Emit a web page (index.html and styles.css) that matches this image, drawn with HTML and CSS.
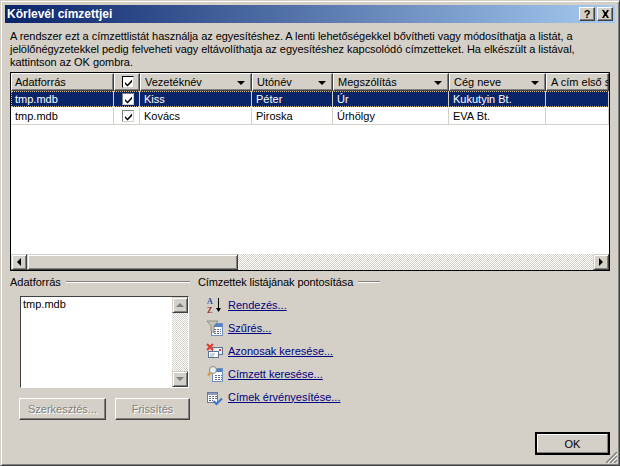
FILE: index.html

```html
<!DOCTYPE html>
<html>
<head>
  <title>Körlevél címzettjei</title>
  <link rel="stylesheet" href="styles.css">
</head>
<body>
  <div class="window">
    <div class="titlebar">
      <span class="title">Körlevél címzettjei</span>
      <span class="cap-btn help">?</span>
      <span class="cap-btn close">
        <svg width="9" height="8" viewBox="0 0 9 8"><path d="M1 0h2l1 2h1l1-2h2L6 3.500V4.500L8 8H6L5 6H4L3 8H1l2-3.500V3.500z" fill="#000"/></svg>
      </span>
    </div>
    <div class="content">
      <p class="intro">A rendszer ezt a címzettlistát használja az egyesítéshez. A lenti lehetőségekkel bővítheti vagy módosíthatja a listát, a<br>jelölőnégyzetekkel pedig felveheti vagy eltávolíthatja az egyesítéshez kapcsolódó címzetteket. Ha elkészült a listával,<br>kattintson az OK gombra.</p>

      <div class="grid">
        <div class="row head">
          <div class="cell c-src">Adatforrás</div>
          <div class="cell c-chk"><span class="check"><svg width="9" height="9" viewBox="0 0 9 9"><path d="M1 4l2.500 2.500L8 1.500v2.500L3.500 8.500 1 6z" fill="#000"/></svg></span></div>
          <div class="cell c-last">Vezetéknév<i class="arrow"></i></div>
          <div class="cell c-first">Utónév<i class="arrow"></i></div>
          <div class="cell c-title">Megszólítás<i class="arrow"></i></div>
          <div class="cell c-comp">Cég neve<i class="arrow"></i></div>
          <div class="cell c-addr">A cím első s</div>
        </div>
        <div class="row selected">
          <div class="cell c-src">tmp.mdb</div>
          <div class="cell c-chk"><span class="check"><svg width="9" height="9" viewBox="0 0 9 9"><path d="M1 4l2.500 2.500L8 1.500v2.500L3.500 8.500 1 6z" fill="#000"/></svg></span></div>
          <div class="cell c-last">Kiss</div>
          <div class="cell c-first">Péter</div>
          <div class="cell c-title">Úr</div>
          <div class="cell c-comp">Kukutyin Bt.</div>
          <div class="cell c-addr"></div>
        </div>
        <div class="row">
          <div class="cell c-src">tmp.mdb</div>
          <div class="cell c-chk"><span class="check"><svg width="9" height="9" viewBox="0 0 9 9"><path d="M1 4l2.500 2.500L8 1.500v2.500L3.500 8.500 1 6z" fill="#000"/></svg></span></div>
          <div class="cell c-last">Kovács</div>
          <div class="cell c-first">Piroska</div>
          <div class="cell c-title">Úrhölgy</div>
          <div class="cell c-comp">EVA Bt.</div>
          <div class="cell c-addr"></div>
        </div>
        <div class="grid-fill"></div>
        <div class="hscroll">
          <span class="sb-btn"><i class="tri-left"></i></span>
          <span class="sb-thumb"></span>
          <span class="sb-track"></span>
          <span class="sb-btn"><i class="tri-right"></i></span>
        </div>
      </div>

      <div class="lower">
        <div class="source">
          <div class="group-label"><span>Adatforrás</span><i class="rule"></i></div>
          <div class="listbox">
            <div class="list-text">tmp.mdb</div>
            <div class="vscroll">
              <span class="sb-btn"><i class="tri-up"></i></span>
              <span class="sb-track"></span>
              <span class="sb-btn"><i class="tri-down"></i></span>
            </div>
          </div>
          <div class="source-btns">
            <span class="btn disabled edit">Szerkesztés...</span>
            <span class="btn disabled refresh">Frissítés</span>
          </div>
        </div>

        <div class="refine">
          <div class="group-label"><span class="refine-label">Címzettek listájának pontosítása</span><i class="rule short"></i></div>
          <ul class="links">
            <li>
              <svg class="ico" width="20" height="20" viewBox="0 0 20 20"><text x="3" y="9" class="az-a">A</text><text x="3" y="18" class="az-z">Z</text><path d="M14.500 3v11" stroke="#000" fill="none"/><path d="M12 13h5l-2.500 4z" fill="#000"/></svg>
              <a href="#">Rendezés...</a>
            </li>
            <li>
              <svg class="ico" width="20" height="20" viewBox="0 0 20 20"><rect x="7.500" y="5.500" width="11" height="12" fill="#fff" stroke="#6f8fc0"/><path d="M8 6h10v3H8z" fill="#4f82cc"/><path d="M10 11.500h7M10 13.500h7M10 15.500h7" stroke="#5d6a88" stroke-dasharray="2 1"/><path d="M3 3h11L10 8v7l-3-2V8z" fill="#c4c4ba" stroke="#77776e" stroke-width=".7"/></svg>
              <a href="#">Szűrés...</a>
            </li>
            <li>
              <svg class="ico" width="20" height="20" viewBox="0 0 20 20"><rect x="8.500" y="6.500" width="10" height="7" fill="#e9eef5" stroke="#5f7396"/><path d="M15 8h2v2h-2z" fill="#d84a3a"/><rect x="4.500" y="10.500" width="10" height="6" fill="#fff" stroke="#5f7396"/><path d="M6 13h5M6 15h4" stroke="#9aa6ba"/><path d="M3 3l6 6M9 3L3 9" stroke="#e0392c" stroke-width="2"/></svg>
              <a href="#">Azonosak keresése...</a>
            </li>
            <li>
              <svg class="ico" width="20" height="20" viewBox="0 0 20 20"><rect x="8.500" y="4.500" width="10" height="13" fill="#fff" stroke="#6f8fc0"/><path d="M9 5h9v3H9z" fill="#4f82cc"/><path d="M11 11.500h7M11 13.500h7M11 15.500h7" stroke="#5d6a88" stroke-dasharray="2 1"/><circle cx="9" cy="6" r="3.500" fill="#e6eef6" stroke="#8a8a80"/><path d="M6.500 8.500L4 11.500" stroke="#d69a3c" stroke-width="2.500"/></svg>
              <a href="#">Címzett keresése...</a>
            </li>
            <li>
              <svg class="ico" width="20" height="20" viewBox="0 0 20 20"><rect x="3.500" y="5.500" width="10" height="10" fill="#fff" stroke="#6a7b9e"/><path d="M4 6h9v2H4z" fill="#8a9bbd"/><path d="M5 9.500h8M5 11.500h8M5 13.500h4" stroke="#5d6a88" stroke-dasharray="2 1"/><path d="M9.500 14l3 3L18 11.500" stroke="#3f78d0" stroke-width="2" fill="none"/></svg>
              <a href="#">Címek érvényesítése...</a>
            </li>
          </ul>
        </div>
      </div>

      <div class="footer">
        <span class="btn ok">OK</span>
      </div>
    </div>
    <svg class="grip" width="12" height="12" viewBox="0 0 12 12"><path d="M12 1L1 12M12 5L5 12M12 9L9 12" stroke="#808080" stroke-width="1.500" fill="none"/><path d="M12 3L3 12M12 7L7 12" stroke="#fff" fill="none"/></svg>
  </div>
</body>
</html>
```

FILE: styles.css

```css
* { box-sizing: border-box; }
html, body { margin: 0; padding: 0; }
body { width: 620px; height: 466px; overflow: hidden; font-family: "Liberation Sans", Arial, sans-serif; font-size: 11px; color: #000; background: #d4d0c8; }

.window { position: relative; width: 620px; height: 466px; display: flex; flex-direction: column; padding: 4px; background: #d4d0c8; border: 1px solid #404040; border-top-color: #d4d0c8; border-left-color: #d4d0c8; box-shadow: inset 1px 1px 0 #fff, inset -1px -1px 0 #808080; }

.titlebar { height: 18px; flex: none; display: flex; align-items: center; padding: 0 2px; background: linear-gradient(to right, #0a246a, #a6caf0); }
.title { flex: 1; color: #fff; font-weight: bold; font-size: 12px; }
.cap-btn { width: 16px; height: 14px; display: flex; align-items: center; justify-content: center; background: #d4d0c8; border: 1px solid #404040; border-top-color: #fff; border-left-color: #fff; box-shadow: inset -1px -1px 0 #808080; font-weight: bold; font-size: 11px; }
.help { margin-right: 2px; }

.content { flex: 1; display: flex; flex-direction: column; padding: 7px 5px 0; min-height: 0; }
.intro { margin: 0; line-height: 13px; height: 42px; letter-spacing: -0.05px; white-space: nowrap; }

.grid { width: 600px; height: 199px; flex: none; display: flex; flex-direction: column; background: #fff; border: 1px solid #000; overflow: hidden; }
.row { display: flex; height: 17px; flex: none; border-bottom: 1px solid #d4d0c8; }
.cell { height: 100%; padding: 2px 3px 0 4px; border-right: 1px solid #d4d0c8; white-space: nowrap; overflow: hidden; position: relative; }
.head { height: 18px; background: #d4d0c8; border-bottom: none; }
.head .cell { border: 1px solid #404040; border-top-color: #fff; border-left-color: #fff; box-shadow: inset -1px -1px 0 #808080; padding: 2px 3px 0 4px; }
.head .c-src { padding-left: 3px; }
.selected { background: #0a246a; color: #fff; outline: 1px dotted #d4c08c; outline-offset: -1px; border-bottom: none; height: 16px; margin-bottom: 1px; }
.selected .cell { border-right-color: #d4d0c8; }

.c-src { width: 103px; }
.c-chk { width: 26px; display: flex; }
.c-last { width: 112px; }
.c-first { width: 81px; }
.c-title { width: 116px; }
.c-comp { width: 97px; }
.c-addr { flex: 1; }
.cell.c-chk { padding-left: 8px; }
.head .cell.c-chk { padding-left: 7px; }

.check { width: 12px; height: 12px; display: flex; align-items: center; justify-content: center; background: #fff; border: 1px solid #808080; border-right-color: #d4d0c8; border-bottom-color: #d4d0c8; }
.head .check { border: 1px solid #000; border-right-color: #d4d0c8; border-bottom-color: #d4d0c8; }
.arrow { position: absolute; right: 6px; top: 7px; width: 0; height: 0; border-left: 4px solid transparent; border-right: 4px solid transparent; border-top: 4px solid #000; }

.grid-fill { flex: 1; }
.hscroll { height: 16px; flex: none; display: flex; background: #d4d0c8; }
.sb-btn { width: 16px; height: 16px; flex: none; display: flex; align-items: center; justify-content: center; background: #d4d0c8; border: 1px solid #404040; border-top-color: #d4d0c8; border-left-color: #d4d0c8; box-shadow: inset 1px 1px 0 #fff, inset -1px -1px 0 #808080; }
.sb-thumb { width: 211px; background: #d4d0c8; border: 1px solid #404040; border-top-color: #d4d0c8; border-left-color: #d4d0c8; box-shadow: inset 1px 1px 0 #fff, inset -1px -1px 0 #808080; }
.sb-track { flex: 1; background: repeating-conic-gradient(#d4d0c8 0 25%, #fff 0 50%) 0 0 / 2px 2px; }
.tri-left { border-top: 4px solid transparent; border-bottom: 4px solid transparent; border-right: 4px solid #000; }
.tri-right { border-top: 4px solid transparent; border-bottom: 4px solid transparent; border-left: 4px solid #000; }
.tri-up { border-left: 4px solid transparent; border-right: 4px solid transparent; border-bottom: 4px solid #808080; }
.tri-down { border-left: 4px solid transparent; border-right: 4px solid transparent; border-top: 4px solid #808080; }

.lower { display: flex; margin-top: 4px; }
.source { width: 180px; flex: none; }
.group-label { display: flex; align-items: center; height: 14px; }
.refine-label { letter-spacing: -0.1px; }
.rule { flex: 1; height: 2px; margin-left: 5px; border-top: 1px solid #808080; border-bottom: 1px solid #fff; }
.rule.short { flex: none; width: 22px; }

.listbox { display: flex; width: 169px; height: 92px; margin: 7px 0 0 10px; background: #fff; border: 1px solid #404040; border-right-color: #fff; border-bottom-color: #fff; }
.list-text { flex: 1; padding: 1px 2px; }
.vscroll { width: 16px; display: flex; flex-direction: column; }
.source-btns { display: flex; gap: 9px; margin: 10px 0 0 9px; }

.btn { display: flex; align-items: center; justify-content: center; height: 23px; background: #d4d0c8; border: 1px solid #404040; border-top-color: #fff; border-left-color: #fff; box-shadow: inset -1px -1px 0 #808080; }
.btn.disabled { height: 22px; color: #808080; text-shadow: 1px 1px 0 #fff; }
.edit { width: 87px; }
.refresh { width: 75px; }
.ok { width: 75px; height: 23px; border: 2px solid #000; box-shadow: inset -1px -1px 0 #808080, inset 1px 1px 0 #fff; }

.refine { margin-left: 8px; flex: 1; }
.links { list-style: none; margin: 4px 0 0; padding: 0 0 0 6px; }
.links li { height: 23px; display: flex; align-items: center; gap: 4px; }
.links a { color: #000080; text-decoration: underline; }
.ico { flex: none; }
.az-a { font: bold 8px "Liberation Serif", serif; fill: #2c4a9c; }
.az-z { font: bold 8px "Liberation Serif", serif; fill: #8c3a2c; }

.footer { margin-top: auto; display: flex; justify-content: flex-end; padding: 0 0 6px 0; }
.grip { position: absolute; right: 2px; bottom: 2px; }
```
